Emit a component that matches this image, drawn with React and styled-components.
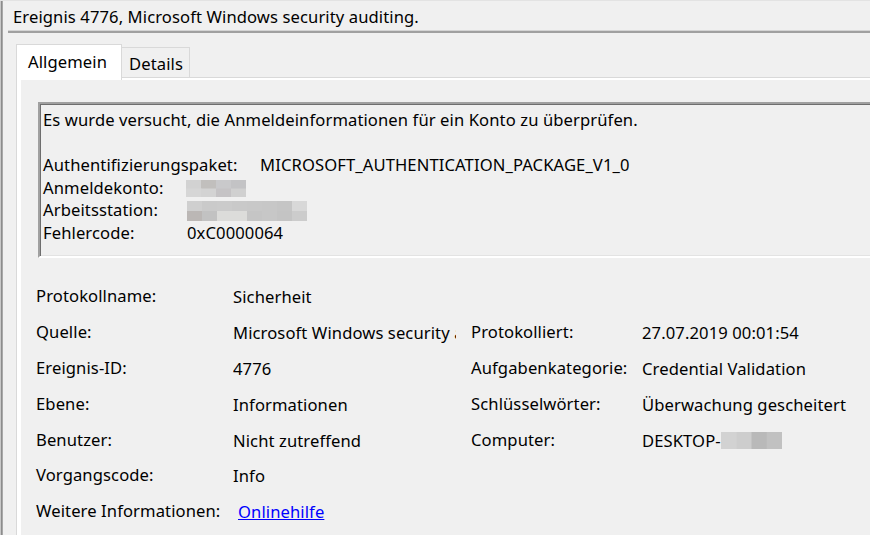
import React from "react";
import styled, { createGlobalStyle } from "styled-components";

const GlobalStyle = createGlobalStyle`
  html, body { margin: 0; padding: 0; background: #f0f0f0; overflow: hidden; }
  body { font-family: "Noto Sans", "Open Sans", sans-serif; color: #000; }
  #root { width: 870px; height: 535px; overflow: hidden; }
`;

const FONT = "16.6px";

const Window = styled.div`
  width: 870px;
  height: 535px;
  overflow: hidden;
  background: #f0f0f0;
  border-top: 1px solid #e3e3e3;
  box-sizing: border-box;
  box-shadow: inset 1px 0 0 #c8c8c8, inset 2px 0 0 #8c8c8c, inset 3px 0 0 #a8a8a8;
  font-size: ${FONT};
  letter-spacing: 0.1px;
`;

const TitleBar = styled.div`
  margin-left: 8px;
  height: 30px;
  border-bottom: 2px solid #a0a0a0;
  box-shadow: 0 -1px 0 #d4d4d4 inset;
  display: flex;
  align-items: center;
`;

const Title = styled.div`
  padding-left: 5px;
  padding-top: 1px;
  white-space: nowrap;
`;

const Tabs = styled.div`
  margin-left: 16px;
  margin-top: 11px;
  width: 900px;
`;

const TabStrip = styled.div`
  display: flex;
  align-items: flex-end;
  height: 33px;
  position: relative;
  z-index: 1;
`;

const Tab = styled.div`
  box-sizing: border-box;
  height: ${(p) => (p.$active ? "36px" : "30px")};
  margin-bottom: ${(p) => (p.$active ? "-3px" : "0")};
  padding: ${(p) => (p.$active ? "0 14px 3px 11px" : "1px 6px 0 7px")};
  background: ${(p) => (p.$active ? "#ffffff" : "#f0f0f0")};
  border: 1px solid #d9d9d9;
  border-bottom: none;
  ${(p) => (!p.$active ? "border-left: none;" : "")}
  display: flex;
  align-items: center;
  white-space: nowrap;
`;

const TabPage = styled.div`
  border-top: 1px solid #d9d9d9;
  border-left: 1px solid #d9d9d9;
  background: #ffffff;
  padding: 2px 0 0 4px;
`;

const PageInner = styled.div`
  background: #f0f0f0;
  padding: 22px 0 40px 0;
  height: 470px;
`;

const DescriptionBox = styled.div`
  margin-left: 17px;
  border-top: 2px solid #a0a0a0;
  border-left: 2px solid #a0a0a0;
  border-bottom: 2px solid #ffffff;
  box-shadow: inset 1px 1px 0 #6e6e6e, 0 -1px 0 #e3e3e3 inset;
  padding: 5px 3px 11px 3px;
  line-height: 22.6px;
`;

const DescLine = styled.div`
  height: 22.6px;
  white-space: nowrap;
`;

const DescRow = styled.div`
  display: flex;
  align-items: center;
  height: 22.6px;
  white-space: nowrap;
`;

const DescLabel = styled.span`
  width: ${(p) => p.$tabs * 72 + (p.$extra || 0)}px;
  flex: none;
`;

const Mosaic = styled.svg`
  display: block;
  flex: none;
`;

const PropGrid = styled.div`
  display: grid;
  grid-template-columns: 197px 238px 171px 1fr;
  grid-auto-rows: 35.9px;
  margin-top: 21px;
  padding-left: 15px;
`;

const Label = styled.div`
  display: flex;
  align-items: center;
  white-space: nowrap;
  padding-bottom: 2px;
`;

const Value = styled.div`
  display: flex;
  align-items: center;
  white-space: nowrap;
  overflow: hidden;
  margin-right: ${(p) => (p.$clip ? "15px" : "0")};
`;

const Link = styled.a`
  color: #0000ff;
  text-decoration: underline;
  margin-left: 5px;
  cursor: pointer;
`;

const Blur = ({ cols, rows, colors, width, height }) => {
  const cw = width / cols;
  const rh = height / rows;
  return (
    <Mosaic width={width} height={height} viewBox={`0 0 ${width} ${height}`}>
      {colors.map((row, r) =>
        row.map((c, i) => (
          <rect key={`${r}-${i}`} x={i * cw} y={r * rh} width={cw + 0.5} height={rh + 0.5} fill={c} />
        ))
      )}
    </Mosaic>
  );
};

const props = [
  ["Protokollname:", "Sicherheit", "", ""],
  ["Quelle:", "Microsoft Windows security auditing.", "Protokolliert:", "27.07.2019 00:01:54"],
  ["Ereignis-ID:", "4776", "Aufgabenkategorie:", "Credential Validation"],
  ["Ebene:", "Informationen", "Schlüsselwörter:", "Überwachung gescheitert"],
  ["Benutzer:", "Nicht zutreffend", "Computer:", "computer"],
  ["Vorgangscode:", "Info", "", ""],
  ["Weitere Informationen:", "link", "", ""],
];

export default function App() {
  return (
    <>
      <GlobalStyle />
      <Window>
        <TitleBar>
          <Title>Ereignis 4776, Microsoft Windows security auditing.</Title>
        </TitleBar>
        <Tabs>
          <TabStrip>
            <Tab $active>Allgemein</Tab>
            <Tab>Details</Tab>
          </TabStrip>
          <TabPage>
            <PageInner>
              <DescriptionBox>
                <DescLine>Es wurde versucht, die Anmeldeinformationen für ein Konto zu überprüfen.</DescLine>
                <DescLine />
                <DescRow>
                  <DescLabel $tabs={3} $extra={1}>Authentifizierungspaket:</DescLabel>
                  <span>MICROSOFT_AUTHENTICATION_PACKAGE_V1_0</span>
                </DescRow>
                <DescRow>
                  <DescLabel $tabs={2} $extra={-1}>Anmeldekonto:</DescLabel>
                  <Blur
                    cols={4}
                    rows={2}
                    width={60}
                    height={17}
                    colors={[
                      ["#d2d2d2", "#c1bfbd", "#c9c9cb", "#c3c3c5"],
                      ["#d6d6d6", "#d3d3d3", "#c5c3c5", "#d0d0d0"],
                    ]}
                  />
                </DescRow>
                <DescRow>
                  <DescLabel $tabs={2}>Arbeitsstation:</DescLabel>
                  <Blur
                    cols={8}
                    rows={2}
                    width={120}
                    height={20}
                    colors={[
                      ["#cfcfcf", "#cacaca", "#cbcbcb", "#c9c9c9", "#c8c8c8", "#c7c7c7", "#c5c5c5", "#d8d8d8"],
                      ["#bbb7b5", "#c2c2c2", "#dcdcda", "#dcdcda", "#c5c5c5", "#c7c7c7", "#c4c4c4", "#cccccc"],
                    ]}
                  />
                </DescRow>
                <DescRow>
                  <DescLabel $tabs={2}>Fehlercode:</DescLabel>
                  <span>0xC0000064</span>
                </DescRow>
              </DescriptionBox>
              <PropGrid>
                {props.map(([l1, v1, l2, v2]) => (
                  <React.Fragment key={l1}>
                    <Label>{l1}</Label>
                    <Value $clip>{v1 === "link" ? <Link>Onlinehilfe</Link> : v1}</Value>
                    <Label>{l2}</Label>
                    <Value>
                      {v2 === "computer" ? (
                        <>
                          DESKTOP-
                          <Blur
                            cols={4}
                            rows={1}
                            width={61}
                            height={17}
                            colors={[["#d2d2d2", "#cdcdcd", "#b9b9b9", "#c1c1c1"]]}
                          />
                        </>
                      ) : (
                        v2
                      )}
                    </Value>
                  </React.Fragment>
                ))}
              </PropGrid>
            </PageInner>
          </TabPage>
        </Tabs>
      </Window>
    </>
  );
}
